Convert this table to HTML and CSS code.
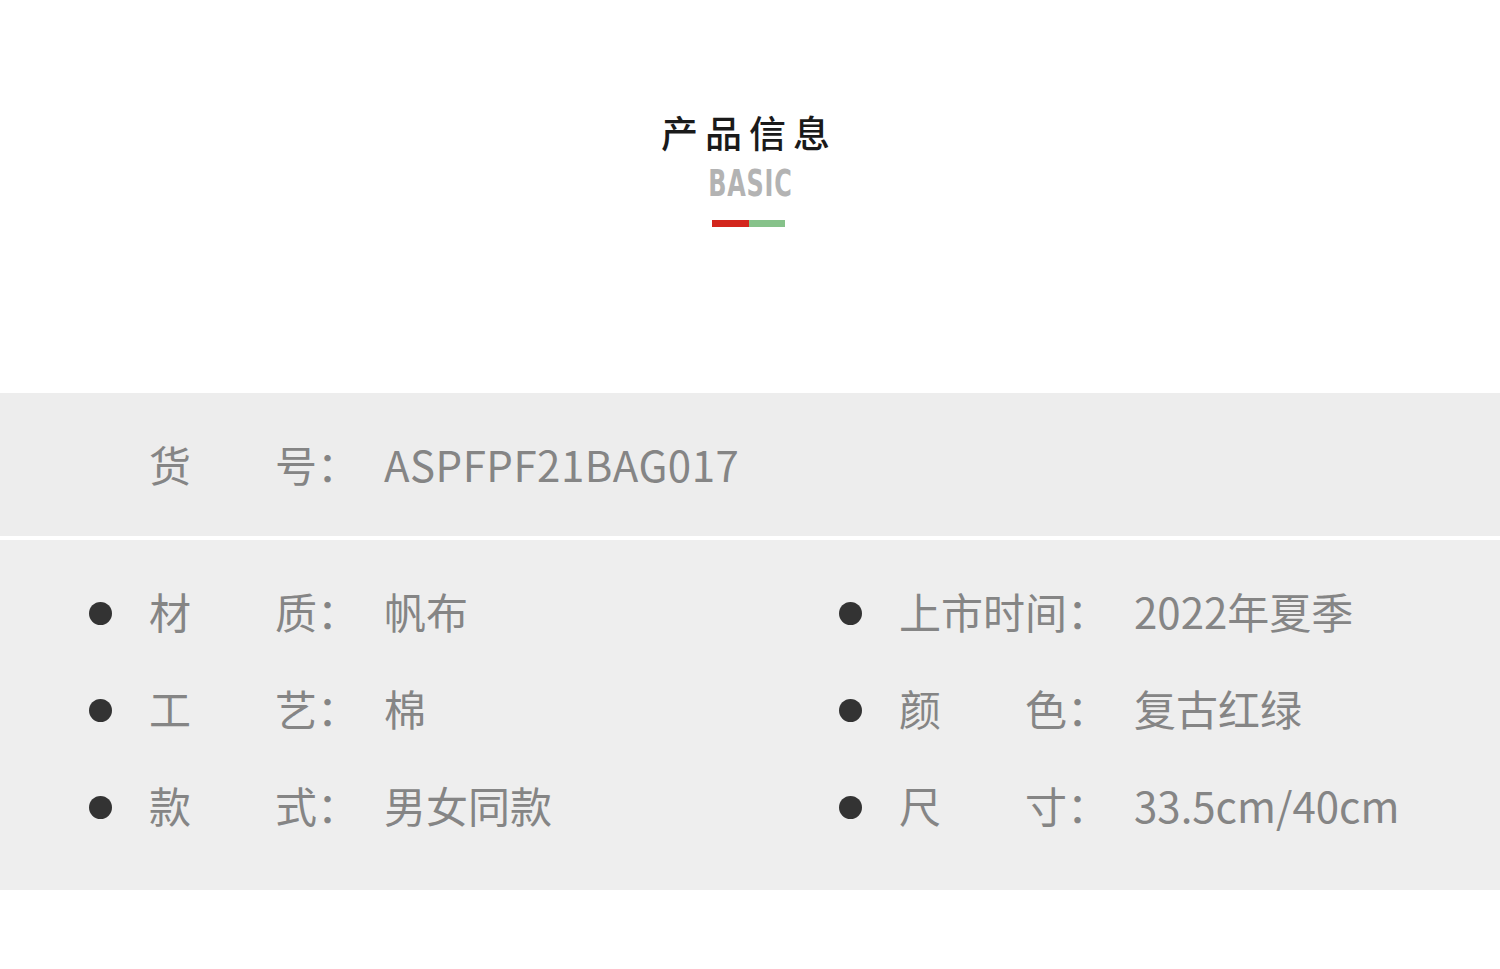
FILE: index.html
```html
<!DOCTYPE html>
<html lang="zh-CN">
<head>
<meta charset="utf-8">
<title>产品信息</title>
<link rel="stylesheet" href="styles.css">
</head>
<body>
<section class="header">
  <h1 class="title">产品信息</h1>
  <div class="subtitle">BASIC</div>
  <div class="bar"><span class="bar-red"></span><span class="bar-green"></span></div>
</section>
<section class="band band-sku">
  <div class="item item-plain">
    <span class="label">货　　号：</span><span class="value value-code">ASPFPF21BAG017</span>
  </div>
</section>
<section class="band band-spec">
  <div class="col">
    <div class="item"><span class="dot"></span><span class="label">材　　质：</span><span class="value">帆布</span></div>
    <div class="item"><span class="dot"></span><span class="label">工　　艺：</span><span class="value">棉</span></div>
    <div class="item"><span class="dot"></span><span class="label">款　　式：</span><span class="value">男女同款</span></div>
  </div>
  <div class="col">
    <div class="item"><span class="dot"></span><span class="label">上市时间：</span><span class="value">2022年夏季</span></div>
    <div class="item"><span class="dot"></span><span class="label">颜　　色：</span><span class="value">复古红绿</span></div>
    <div class="item"><span class="dot"></span><span class="label">尺　　寸：</span><span class="value">33.5cm/40cm</span></div>
  </div>
</section>
<div class="footer"></div>
</body>
</html>
```

FILE: styles.css
```css
html, body {
  margin: 0;
  padding: 0;
  background: #ffffff;
}
body {
  font-family: "Noto Sans CJK SC", "Noto Sans", sans-serif;
  width: 1500px;
}
.header {
  height: 393px;
  box-sizing: border-box;
  padding-top: 107px;
  display: flex;
  flex-direction: column;
  align-items: center;
}
.title {
  margin: 0;
  font-size: 37px;
  line-height: 50px;
  font-weight: 500;
  color: #1a1a1a;
  letter-spacing: 7px;
  padding-right: 2px;
}
.subtitle {
  margin-top: 7px;
  font-family: "DejaVu Sans Condensed", "DejaVu Sans", sans-serif;
  font-weight: 700;
  font-size: 37px;
  line-height: 39px;
  color: #b3b3b3;
  transform: scaleX(0.72);
  letter-spacing: 1px;
}
.bar {
  margin-top: 17px;
  display: flex;
  height: 7px;
  width: 73px;
  margin-right: 3px;
}
.bar-red {
  flex: 0 0 37px;
  background: #d3261d;
}
.bar-green {
  flex: 1;
  background: #86c28a;
}
.band {
  background: #ededed;
}
.band-sku {
  height: 143px;
  display: flex;
  align-items: center;
  padding-left: 149px;
  padding-bottom: 2px;
  box-sizing: border-box;
  margin-bottom: 4px;
}
.band-spec {
  height: 350px;
  box-sizing: border-box;
  padding-bottom: 16px;
  background: #eeeeee;
  display: grid;
  grid-template-columns: 750px 750px;
  align-items: center;
}
.col {
  display: flex;
  flex-direction: column;
  gap: 54px;
  padding-left: 89px;
}
.item {
  display: flex;
  align-items: center;
  height: 43px;
  font-size: 42px;
  line-height: 43px;
  color: #858585;
  white-space: nowrap;
}
.dot {
  width: 23px;
  height: 23px;
  border-radius: 50%;
  background: #333333;
  margin-right: 37px;
  margin-top: 6px;
  flex: none;
}
.label {
  flex: none;
}
.value {
  margin-left: 25px;
}
.value-code {
  letter-spacing: 0.5px;
}
.footer {
  height: 79px;
}
```
